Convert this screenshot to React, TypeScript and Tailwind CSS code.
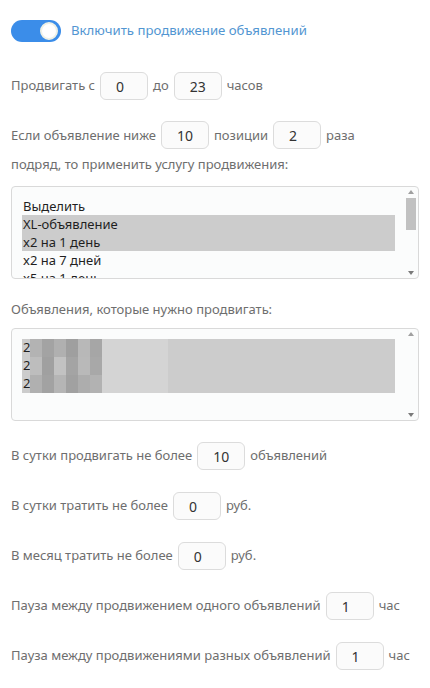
import React, { useState } from "react";

const font = { fontFamily: '"Noto Sans", "Open Sans", Arial, sans-serif' };

function NumField({ value }: { value: string }) {
  return (
    <span className="mx-[5px] inline-flex h-[28px] w-[48px] items-center rounded-[6px] border border-[#dcdcdc] bg-[#fbfbfb] pl-[15px] align-middle text-[14px] text-[#333]">
      {value}
    </span>
  );
}

function Row({ children, className = "" }: { children: React.ReactNode; className?: string }) {
  return (
    <div className={`flex h-[28px] items-center text-[13px] text-[#6e6e6e] ${className}`}>{children}</div>
  );
}

function FakeScrollbar({ thumb }: { thumb: boolean }) {
  return (
    <div className="flex w-[12px] flex-col items-center py-[3px]">
      <span className="h-0 w-0 border-x-[3px] border-b-[4px] border-x-transparent border-b-[#a0a0a0]" />
      <div className="mt-[4px] flex-1 self-stretch">
        {thumb ? <div className="mx-auto h-[32px] w-[10px] bg-[#c1c1c1]" /> : null}
      </div>
      <span className="h-0 w-0 border-x-[3px] border-t-[4px] border-x-transparent border-t-[#7a7a7a]" />
    </div>
  );
}

const services = ["Выделить", "XL-объявление", "x2 на 1 день", "x2 на 7 дней", "x5 на 1 день"];

const mosaic = [
  ["#b3b3b3", "#a3a3a3", "#b0b0b0", "#9f9f9f", "#b8b8b8", "#a6a6a6"],
  ["#bdbdbd", "#a0a0a0", "#c2c2c2", "#a4a4a4", "#b9b9b9", "#a8a8a8"],
  ["#b0b0b0", "#a2a2a2", "#b5b5b5", "#a1a1a1", "#adadad", "#b2b2b2"],
];

export default function App() {
  const [enabled, setEnabled] = useState(true);

  return (
    <div className="min-h-[688px] w-[430px] bg-white pl-[11px] pr-[11px]" style={font}>
      <div className="mt-[20px] flex h-[22px] items-center">
        <button
          type="button"
          onClick={() => setEnabled(!enabled)}
          className="relative h-[22px] w-[50px] rounded-full bg-[#3b8de9]"
        >
          <span className="absolute right-[3px] top-[2px] h-[18px] w-[18px] rounded-full border-2 border-[#eef1e6] bg-white" />
        </button>
        <span className="ml-[10px] text-[13.2px] text-[#5296d2]">Включить продвижение объявлений</span>
      </div>

      <Row className="mt-[30px]">
        Продвигать с<NumField value="0" />до<NumField value="23" />часов
      </Row>

      <div className="mt-[21px] text-[13px] leading-[29px] text-[#6e6e6e]">
        <div className="flex h-[28px] items-center">
          Если объявление ниже<NumField value="10" />позиции<NumField value="2" />раза
        </div>
        <div className="mt-[1px] h-[29px]">подряд, то применить услугу продвижения:</div>
      </div>

      <div className="mt-[7px] flex h-[93px] overflow-hidden rounded-[4px] border border-[#d9d9d9] bg-[#fbfcfc] pr-[1px]">
        <div className="flex-1 overflow-hidden pl-[10px] pr-[10px] pt-[10px] text-[13px] leading-[18px] text-[#1f1f1f]">
          {services.map((s, i) => (
            <div key={s} className={`pl-[1px] ${i === 1 || i === 2 ? "bg-[#cccccc]" : ""}`}>
              {s}
            </div>
          ))}
        </div>
        <FakeScrollbar thumb />
      </div>

      <div className="mt-[22px] flex h-[18px] items-center text-[13px] text-[#6e6e6e]">
        Объявления, которые нужно продвигать:
      </div>

      <div className="mt-[9px] flex h-[93px] overflow-hidden rounded-[4px] border border-[#d9d9d9] bg-[#fbfcfc] pr-[1px]">
        <div className="flex-1 pl-[10px] pr-[10px] pt-[10px]">
          <div className="bg-[#cccccc]">
            {mosaic.map((row, r) => (
              <div key={r} className="flex h-[18px] items-center text-[13px] text-[#1f1f1f]">
                <span className="w-[8px] pl-[1px]">2</span>
                <div className="flex h-full">
                  {row.map((c, j) => (
                    <span key={j} className="h-full w-[12px]" style={{ backgroundColor: c }} />
                  ))}
                  <span className="h-full w-[66px] bg-[#d4d4d4]" />
                </div>
              </div>
            ))}
          </div>
        </div>
        <FakeScrollbar thumb={false} />
      </div>

      <Row className="mt-[21px]">
        В сутки продвигать не более<NumField value="10" />объявлений
      </Row>
      <Row className="mt-[22px]">
        В сутки тратить не более<NumField value="0" />руб.
      </Row>
      <Row className="mt-[22px]">
        В месяц тратить не более<NumField value="0" />руб.
      </Row>
      <Row className="mt-[22px]">
        Пауза между продвижением одного объявлений<NumField value="1" />час
      </Row>
      <Row className="mt-[22px]">
        Пауза между продвижениями разных объявлений<NumField value="1" />час
      </Row>
    </div>
  );
}
